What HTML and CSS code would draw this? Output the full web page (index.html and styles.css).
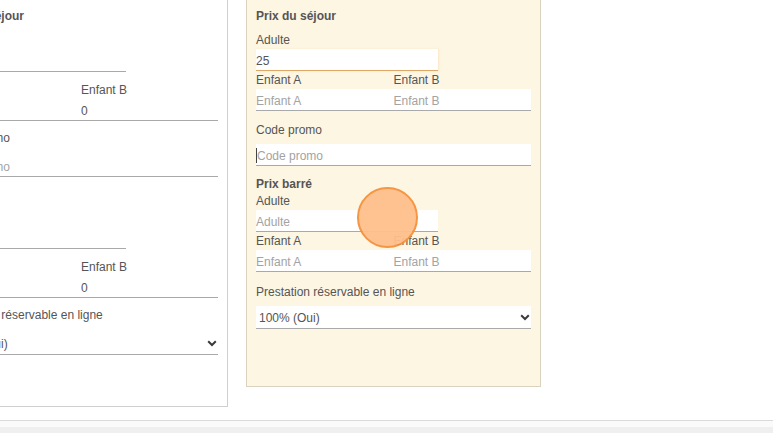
FILE: index.html
```html
<!DOCTYPE html>
<html lang="fr">
<head>
<meta charset="utf-8">
<title>Prix du séjour</title>
<link rel="stylesheet" href="styles.css">
</head>
<body>
<div class="page">
  <div class="panels">
    <section class="panel panel--left">
      <h3 class="title">Prix du séjour</h3>
      <div class="field field--adult field--first">
        <label class="label">Adulte</label>
        <input class="input" value="0">
      </div>
      <div class="row">
        <div class="field"><label class="label">Enfant A</label><input class="input" value="0"></div>
        <div class="field"><label class="label">Enfant B</label><input class="input" value="0"></div>
      </div>
      <div class="field field--promo">
        <label class="label">Code promo</label>
        <input class="input input--gap" placeholder="Code promo">
      </div>
      <h3 class="title title--second">Prix barré</h3>
      <div class="field field--adult">
        <label class="label">Adulte</label>
        <input class="input" value="0">
      </div>
      <div class="row">
        <div class="field"><label class="label">Enfant A</label><input class="input" value="0"></div>
        <div class="field"><label class="label">Enfant B</label><input class="input" value="0"></div>
      </div>
      <div class="field field--presta">
        <label class="label">Prestation réservable en ligne</label>
        <div class="select">
          <span>100% (Oui)</span>
          <svg class="chevron" width="10" height="7" viewBox="0 0 10 7"><path d="M1.2 1.3 L5 5 L8.8 1.3" fill="none" stroke="#3a3a3a" stroke-width="2"/></svg>
        </div>
      </div>
    </section>

    <section class="panel panel--right">
      <h3 class="title">Prix du séjour</h3>
      <div class="field field--adult field--first">
        <label class="label">Adulte</label>
        <input class="input input--focus" value="25">
      </div>
      <div class="row">
        <div class="field"><label class="label">Enfant A</label><input class="input" placeholder="Enfant A"></div>
        <div class="field"><label class="label">Enfant B</label><input class="input" placeholder="Enfant B"></div>
      </div>
      <div class="field field--promo">
        <label class="label">Code promo</label>
        <input class="input input--gap input--caret" placeholder="Code promo">
      </div>
      <h3 class="title title--second">Prix barré</h3>
      <div class="field field--adult">
        <label class="label">Adulte</label>
        <input class="input" placeholder="Adulte">
      </div>
      <div class="row">
        <div class="field"><label class="label">Enfant A</label><input class="input" placeholder="Enfant A"></div>
        <div class="field"><label class="label">Enfant B</label><input class="input" placeholder="Enfant B"></div>
      </div>
      <div class="field field--presta">
        <label class="label">Prestation réservable en ligne</label>
        <div class="select">
          <span>100% (Oui)</span>
          <svg class="chevron" width="10" height="7" viewBox="0 0 10 7"><path d="M1.2 1.3 L5 5 L8.8 1.3" fill="none" stroke="#3a3a3a" stroke-width="2"/></svg>
        </div>
      </div>
    </section>
  </div>

  <footer class="footer"><div class="footer-bar"></div></footer>

  <div class="click-dot"></div>
</div>
</body>
</html>
```

FILE: styles.css
```css
* { box-sizing: border-box; }

html, body {
  margin: 0;
  padding: 0;
  background: #ffffff;
}

body {
  font-family: "Liberation Sans", Arial, sans-serif;
  font-size: 12px;
  color: #555555;
  width: 773px;
  height: 433px;
  overflow: hidden;
}

.page {
  position: relative;
  width: 773px;
  height: 433px;
  overflow: hidden;
}

.panels {
  display: flex;
  align-items: flex-start;
  gap: 18px;
  margin-top: -20px;
  margin-left: -67px;
}

.panel {
  width: 295px;
  flex: none;
  border: 1px solid #cfcfcf;
  background: #ffffff;
  padding: 27px 9px 57px 9px;
}

.panel--left {
  padding-left: 10px;
  padding-right: 9px;
  padding-bottom: 51px;
}

.panel--right {
  background: #fdf6e3;
  border-color: #d9d2bf;
}

.title {
  margin: 0;
  font-size: 12px;
  line-height: 16px;
  font-weight: bold;
  color: #555555;
}

.title--second { margin-top: 10px; }
.panel--left .title--second { margin-top: 16px; }

.field {
  display: flex;
  flex-direction: column;
}

.field--adult { width: 182px; }
.field--first { margin-top: 7px; }
.panel--left .field--first { margin-top: 8px; }

.field--promo { margin-top: 10px; }
.panel--left .field--promo { margin-top: 8px; }

.field--presta { margin-top: 11px; }
.panel--left .field--presta { margin-top: 8px; }

.label {
  display: block;
  line-height: 18px;
  color: #555555;
  white-space: nowrap;
}

.row {
  display: grid;
  grid-template-columns: 1fr 1fr;
}

.panel--left .row { margin-top: 9px; }

.input {
  display: block;
  width: 100%;
  height: 22px;
  margin: 0;
  padding: 3px 0 0 0;
  border: 0;
  border-bottom: 1px solid #a9a9a9;
  border-radius: 0;
  background: #ffffff;
  font-family: "Liberation Sans", Arial, sans-serif;
  font-size: 12px;
  color: #555555;
  outline: none;
}

.input::placeholder { color: #a3a3a3; opacity: 1; }

.input--gap { margin-top: 5px; }
.panel--left .input--gap { margin-top: 8px; }

.input--focus {
  border-bottom-color: #dfa866;
  box-shadow: 1px 0 2px rgba(240, 200, 140, 0.35);
}

.input--caret {
  padding-left: 1px;
  background: linear-gradient(#444444, #444444) no-repeat 0 4px / 1px 15px, #ffffff;
}

.select {
  display: flex;
  align-items: center;
  justify-content: space-between;
  height: 23px;
  margin-top: 5px;
  padding: 1px 1px 0 3px;
  background: #ffffff;
  border-bottom: 1px solid #a9a9a9;
  color: #555555;
  white-space: nowrap;
}

.panel--left .select { margin-top: 8px; }

.chevron { display: block; flex: none; }

.footer {
  margin-top: 13px;
  border-top: 1px solid #dadada;
  background: #fafafa;
  padding-top: 6px;
}

.footer-bar {
  height: 20px;
  background: #efefef;
}

.click-dot {
  position: absolute;
  left: 357px;
  top: 187px;
  width: 61px;
  height: 61px;
  border-radius: 50%;
  border: 2.5px solid #f4913b;
  background: #ffbf8c;
  opacity: 0.95;
}
```
